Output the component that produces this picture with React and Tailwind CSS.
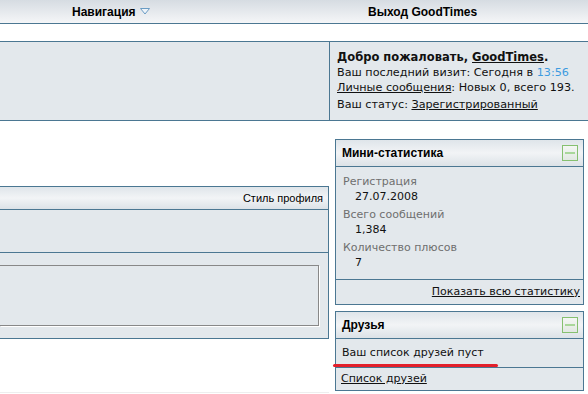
import React from "react";

const MinusBox = () => (
    <div className="w-[16px] h-[16px] border border-[#86c070] bg-gradient-to-b from-[#f4f7f4] to-[#e2e8e2] flex items-center justify-center">
        <div className="w-[10px] h-[2px] bg-[#a9d79a]" />
    </div>
);

const SideBox = ({ title, children }) => (
    <div className="border border-[#4b7792] bg-[#e3e8ec]">
        <div className="h-[27px] flex items-center justify-between pl-[6px] pr-[5px] border-b border-[#4b7792] bg-gradient-to-b from-[#dfe5ea] via-[#f2f4f6] to-[#dce2e7]">
            <span className="font-bold text-[12px] text-black font-['Liberation_Sans',sans-serif]">{title}</span>
            <MinusBox />
        </div>
        {children}
    </div>
);

const App = () => {
    const stats = [
        { label: "Регистрация", value: "27.07.2008" },
        { label: "Всего сообщений", value: "1,384" },
        { label: "Количество плюсов", value: "7" },
    ];

    return (
        <div className="w-[588px] h-[394px] overflow-hidden bg-white text-[11px] text-[#111] font-['DejaVu_Sans',sans-serif] relative">
            {/* top nav */}
            <div className="h-[24px] flex items-center border-b border-[#4b7792] bg-gradient-to-b from-[#d6dce2] to-[#f5f6f8] font-['Liberation_Sans',sans-serif] font-bold text-[12px] text-black">
                <div className="w-[368px] pl-[72px] flex items-center gap-[4px]">
                    Навигация
                    <svg width="10" height="7" viewBox="0 0 10 7">
                        <path d="M0.5 0.5 L9.5 0.5 L5 6 Z" fill="#eef3f8" stroke="#6a9cc4" strokeWidth="1" />
                    </svg>
                </div>
                <div>Выход GoodTimes</div>
            </div>

            {/* welcome row */}
            <div className="mt-[17px] h-[80px] flex border-y border-[#4b7792] bg-[#e3e8ec]">
                <div className="w-[330px] border-r border-[#4b7792]" />
                <div className="pl-[7px] pt-[8px] leading-[15px] text-[11.2px]">
                    <div className="font-bold text-[11.5px]">
                        Добро пожаловать, <span className="underline">GoodTimes</span>.
                    </div>
                    <div>
                        Ваш последний визит: Сегодня в <span className="text-[#3d9be0]">13:56</span>
                    </div>
                    <div>
                        <span className="underline">Личные сообщения</span>: Новых 0, всего 193.
                    </div>
                    <div className="mt-[2px]">
                        Ваш статус: <span className="underline">Зарегистрированный</span>
                    </div>
                </div>
            </div>

            <div className="flex">
                {/* left column */}
                <div className="w-[329px] pt-[65px]">
                    <div className="border border-l-0 border-[#4b7792] bg-[#e3e8ec]">
                        <div className="h-[23px] flex items-center justify-end pr-[5px] border-b border-[#4b7792] bg-gradient-to-b from-[#dfe5ea] via-[#f2f4f6] to-[#dce2e7] font-['Liberation_Sans',sans-serif] text-[11px] text-black">
                            Стиль профиля
                        </div>
                        <div className="h-[43px] border-b border-[#4b7792]" />
                        <div className="pt-[12px] pb-[12px] pr-[9px]">
                            <div className="h-[61px] border border-l-0 border-[#888] shadow-[1px_1px_0_#fff] bg-[#e3e8ec]" />
                        </div>
                    </div>
                    <div className="mt-[53px] h-[1px] bg-[#eeeeee]" />
                </div>

                {/* right column */}
                <div className="ml-[6px] w-[249px] pt-[18px] flex flex-col gap-[6px]">
                    <SideBox title="Мини-статистика">
                        <div className="pl-[7px] pt-[7px] pb-[9px] leading-[15px] border-b border-[#4b7792] flex flex-col gap-[3px]">
                            {stats.map((s) => (
                                <div key={s.label}>
                                    <div className="text-[#6f6f6f]">{s.label}</div>
                                    <div className="pl-[12px]">{s.value}</div>
                                </div>
                            ))}
                        </div>
                        <div className="h-[24px] flex items-center justify-end pr-[3px]">
                            <span className="underline">Показать всю статистику</span>
                        </div>
                    </SideBox>

                    <SideBox title="Друзья">
                        <div className="h-[29px] flex items-center pl-[6px] border-b border-[#4b7792]">
                            Ваш список друзей пуст
                        </div>
                        <div className="h-[22px] flex items-center pl-[5px]">
                            <span className="underline">Список друзей</span>
                        </div>
                    </SideBox>
                </div>
            </div>

            {/* red annotation */}
            <div className="absolute left-[333px] top-[364px] w-[165px] h-[3px] rounded-full bg-[#e3202b]" />
        </div>
    );
};

export default App;
